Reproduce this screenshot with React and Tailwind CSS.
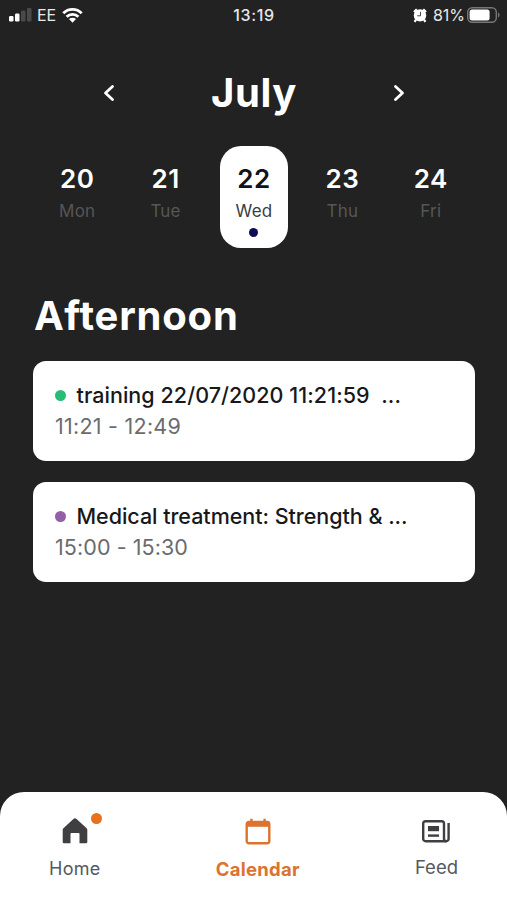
import { useState } from "react";

const DAYS = [
  { date: 20, name: "Mon" },
  { date: 21, name: "Tue" },
  { date: 22, name: "Wed", hasEvents: true },
  { date: 23, name: "Thu" },
  { date: 24, name: "Fri" },
];

const EVENTS = [
  {
    title: "training 22/07/2020 11:21:59 \u00a0...",
    time: "11:21 - 12:49",
    dot: "bg-[#27bd75]",
    titleTracking: "tracking-[0.06px]",
    timeTracking: "tracking-[0.25px]",
  },
  {
    title: "Medical treatment: Strength & ...",
    time: "15:00 - 15:30",
    dot: "bg-[#935fa7]",
    titleTracking: "tracking-[-0.03px]",
    timeTracking: "tracking-[0.08px]",
  },
];

function StatusBar() {
  return (
    <div className="grid h-[30px] grid-cols-3 items-center pl-2 pr-[7px] text-[16px] leading-none text-[#e8e8e8]">
      <div className="flex items-center">
        <svg width="24" height="14" viewBox="0 0 24 14">
          <rect x="1" y="8" width="4.5" height="5.5" rx="1.2" fill="#fff" />
          <rect x="7" y="5.5" width="4.5" height="8" rx="1.2" fill="#fff" />
          <rect x="13" y="2.5" width="4.5" height="11" rx="1.2" fill="#4a4a4a" />
          <rect x="19" y="0" width="4.5" height="13.5" rx="1.2" fill="#4a4a4a" />
        </svg>
        <span className="ml-[5px] w-[19px]">EE</span>
        <svg className="ml-[6px]" width="21" height="16" viewBox="0 0 21 16" fill="none" stroke="#fff" strokeWidth="2.8">
          <path d="M1.3 6.2a13 13 0 0 1 18.4 0" />
          <path d="M4.6 9.8a8.4 8.4 0 0 1 11.8 0" />
          <path d="M7 12.1a5 5 0 0 1 7 0L10.5 15.7z" fill="#fff" stroke="none" />
        </svg>
      </div>
      <span className="text-center font-medium tracking-[0.7px]">13:19</span>
      <div className="flex items-center justify-end">
        <svg width="14" height="15" viewBox="0 0 14 15">
          <circle cx="7" cy="7.4" r="6.2" fill="#fff" />
          <path d="M1 4 3.8 1.2M13 4l-2.8-2.8M3 11.6l-1.4 2.2M11 11.6l1.4 2.2" stroke="#fff" strokeWidth="2.2" />
          <path d="M7.5 3.8v4H4.2" fill="none" stroke="#444" strokeWidth="1" />
        </svg>
        <span className="ml-[6px]">81%</span>
        <svg className="ml-[2px]" width="33" height="16" viewBox="0 0 33 16">
          <rect x="0.7" y="0.7" width="28.6" height="14.6" rx="4.5" fill="none" stroke="#777" strokeWidth="1.4" />
          <rect x="2.6" y="2.6" width="20" height="10.8" rx="2.5" fill="#fff" />
          <path d="M31 5.5c2 .8 2 4.2 0 5z" fill="#777" />
        </svg>
      </div>
    </div>
  );
}

function Chevron({ d }) {
  return (
    <svg width="12" height="18" viewBox="0 0 12 18" fill="none" stroke="#fff" strokeWidth="2.8" strokeLinecap="round" strokeLinejoin="round">
      <path d={d} />
    </svg>
  );
}

function HomeIcon() {
  return (
    <svg width="26" height="26" viewBox="0 0 26 26" fill="#3f3f42">
      <path d="M11.4 1.1a2.2 2.2 0 0 1 3.2 0L24.6 10.2a2 2 0 0 1 .7 1.5V24a1.3 1.3 0 0 1-1.3 1.3H17.5V16a1 1 0 0 0-1-1h-7a1 1 0 0 0-1 1v9.3H2A1.3 1.3 0 0 1 .7 24V11.7a2 2 0 0 1 .7-1.5z" />
    </svg>
  );
}

function CalendarIcon() {
  return (
    <svg width="26" height="27" viewBox="0 0 26 27" fill="none" stroke="#dc7330">
      <rect x="1.7" y="4" width="22.6" height="21.3" rx="2.2" strokeWidth="2.4" />
      <path d="M2 6.2h22" strokeWidth="5.2" />
      <path d="M6.4.8v4M19.6.8v4" strokeWidth="2.4" />
    </svg>
  );
}

function FeedIcon() {
  return (
    <svg width="28" height="23" viewBox="0 0 28 23" fill="none" stroke="#3f3f42" strokeWidth="2.4">
      <path d="M22 18.8V3.6A2.4 2.4 0 0 0 19.6 1.2H3.6A2.4 2.4 0 0 0 1.2 3.6v15.2a2.4 2.4 0 0 0 2.4 2.4h20.6a2.4 2.4 0 0 0 2.4-2.4V3" />
      <path d="M22 18.2v.8a2.2 2.2 0 0 0 2.2 2.2" />
      <path d="M6 8.6h11" strokeWidth="5.2" />
      <path d="M6 15.6h11" />
    </svg>
  );
}

export default function App() {
  const [selected, setSelected] = useState(22);

  return (
    <div className="flex h-[900px] w-[507px] flex-col overflow-hidden bg-[#222222] font-['Inter',sans-serif]">
      <StatusBar />

      {/* Month */}
      <div className="mt-[38px] flex h-[50px] items-center justify-between pl-[103px] pr-[102px]">
        <button type="button" aria-label="Previous month">
          <Chevron d="M9.5 2.5 2.5 9l7 6.5" />
        </button>
        <h1 className="text-[40px] font-bold leading-[50px] tracking-[0.6px] text-white">July</h1>
        <button type="button" aria-label="Next month">
          <Chevron d="M2.5 2.5 9.5 9l-7 6.5" />
        </button>
      </div>

      {/* Days */}
      <div className="mt-7 grid grid-cols-5 pl-[33px] pr-8">
        {DAYS.map((day) => (
          <button
            key={day.date}
            type="button"
            onClick={() => setSelected(day.date)}
            className={`flex h-[102px] w-[68px] flex-col items-center justify-self-center rounded-[21px] pt-[17px] ${
              day.date === selected ? "bg-white text-[#10121e]" : "text-white"
            }`}
          >
            <span className="text-[26px] font-semibold leading-8 tracking-[0.6px]">{day.date}</span>
            <span
              className={`text-[17px] leading-8 tracking-[0.2px] ${
                day.date === selected ? "text-[#3c3c40]" : "text-[#565656]"
              }`}
            >
              {day.name}
            </span>
            {day.hasEvents && <span className="mt-px size-[9px] rounded-full bg-[#100c54]" />}
          </button>
        ))}
      </div>

      {/* Events */}
      <h2 className="mt-[43px] pl-[34px] text-[40px] font-bold leading-[50px] tracking-[0.8px] text-white">
        Afternoon
      </h2>
      <div className="mt-5 flex flex-col gap-[21px] pl-[33px] pr-8">
        {EVENTS.map((event) => (
          <div key={event.time} className="h-[100px] rounded-[13px] bg-white px-[22px] pt-[19px]">
            <div className="flex items-center">
              <span className={`size-[11px] rounded-full ${event.dot}`} />
              <span
                className={`ml-[10.5px] whitespace-nowrap text-[21.5px] font-[450] leading-[31px] text-[#18181b] ${event.titleTracking}`}
              >
                {event.title}
              </span>
            </div>
            <p className={`text-[21.5px] leading-[31px] text-[#6b6b6e] ${event.timeTracking}`}>{event.time}</p>
          </div>
        ))}
      </div>

      {/* Tab bar */}
      <nav className="mt-auto flex h-[108px] justify-between rounded-t-[24px] bg-white px-[49px] leading-6 text-[#55585e]">
        <a className="flex flex-col items-center pt-[26px]">
          <span className="relative">
            <HomeIcon />
            <span className="absolute -right-[14px] -top-[5px] size-[11px] rounded-full bg-[#e9711c]" />
          </span>
          <span className="mt-[13px] text-[18px] tracking-[0.3px]">Home</span>
        </a>
        <a className="flex flex-col items-center pt-[26px]">
          <CalendarIcon />
          <span className="mt-[12px] text-[18.5px] font-bold tracking-[0.25px] text-[#dc7330]">Calendar</span>
        </a>
        <a className="flex flex-col items-center pt-[28px]">
          <FeedIcon />
          <span className="mt-[12px] text-[18.5px]">Feed</span>
        </a>
      </nav>
    </div>
  );
}
